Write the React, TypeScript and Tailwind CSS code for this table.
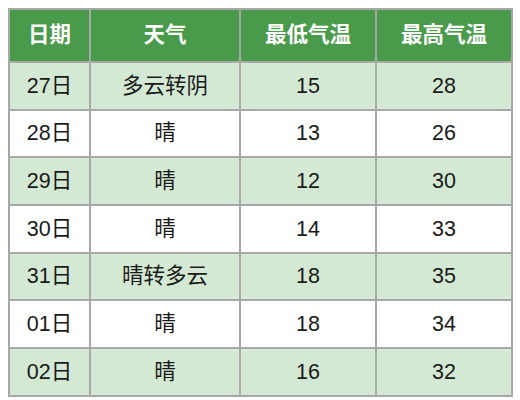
const rows = [
  { day: "27日", weather: "多云转阴", low: "15", high: "28" },
  { day: "28日", weather: "晴", low: "13", high: "26" },
  { day: "29日", weather: "晴", low: "12", high: "30" },
  { day: "30日", weather: "晴", low: "14", high: "33" },
  { day: "31日", weather: "晴转多云", low: "18", high: "35" },
  { day: "01日", weather: "晴", low: "18", high: "34" },
  { day: "02日", weather: "晴", low: "16", high: "32" },
];

const cell = "border-2 border-[#a8a8a8] text-center align-middle p-0";

export default function App() {
  return (
    <div className="w-[520px] h-[400px] bg-white pl-[8px] pt-[8px] font-['Liberation_Sans','Noto_Sans_CJK_SC',sans-serif]">
      <table className="table-fixed border-collapse w-[503px] text-[21.5px] text-[#1a1a1a]">
        <colgroup>
          <col className="w-[81px]" />
          <col className="w-[150px]" />
          <col className="w-[136px]" />
          <col className="w-[136px]" />
        </colgroup>
        <thead>
          <tr className="h-[53px] bg-[#4a9a4b] text-white font-bold">
            <th className={cell}>日期</th>
            <th className={cell}>天气</th>
            <th className={cell}>最低气温</th>
            <th className={cell}>最高气温</th>
          </tr>
        </thead>
        <tbody>
          {rows.map((r, i) => (
            <tr key={r.day} className={`h-[47.7px] ${i % 2 === 0 ? "bg-[#d3e9d4]" : "bg-white"}`}>
              <td className={cell}>{r.day}</td>
              <td className={cell}>{r.weather}</td>
              <td className={cell}>{r.low}</td>
              <td className={cell}>{r.high}</td>
            </tr>
          ))}
        </tbody>
      </table>
    </div>
  );
}
